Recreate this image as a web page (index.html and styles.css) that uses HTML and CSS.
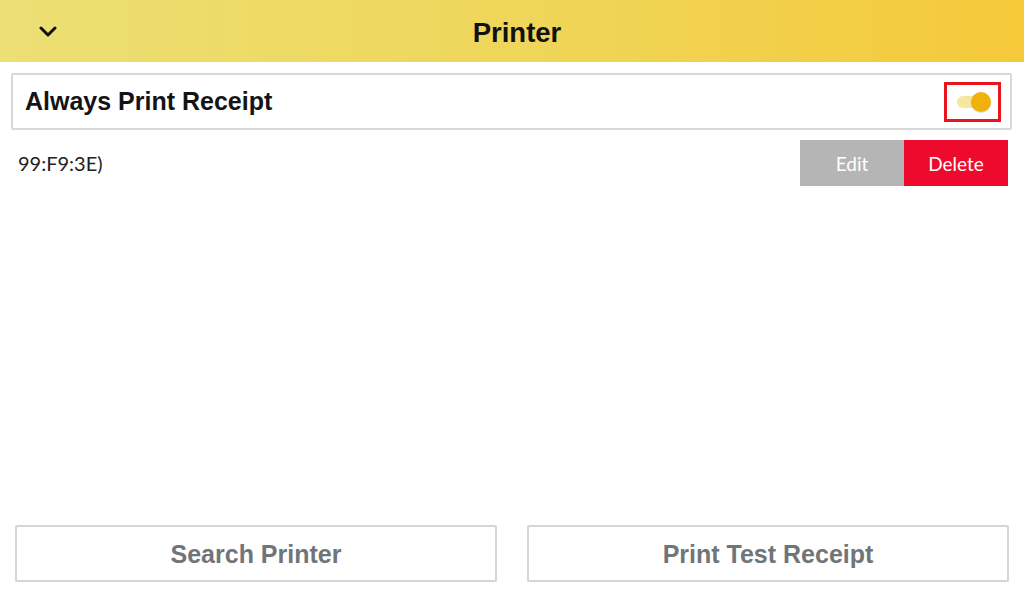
FILE: index.html
```html
<!DOCTYPE html>
<html>
<head>
<meta charset="utf-8">
<link rel="stylesheet" href="styles.css">
</head>
<body>
<div class="app">
  <header class="topbar">
    <span class="back">
      <svg width="18" height="12" viewBox="0 0 18 12"><path d="M2 2 L9 9 L16 2" fill="none" stroke="#111" stroke-width="3" stroke-linecap="round" stroke-linejoin="round"/></svg>
    </span>
    <h1 class="title">Printer</h1>
  </header>
  <main class="content">
    <div class="card">
      <span class="card-label">Always Print Receipt</span>
      <span class="toggle-box">
        <span class="toggle"><span class="track"></span><span class="knob"></span></span>
      </span>
    </div>
    <div class="printer-row">
      <span class="printer-name">99:F9:3E)</span>
      <div class="actions">
        <button class="btn-edit">Edit</button>
        <button class="btn-delete">Delete</button>
      </div>
    </div>
  </main>
  <footer class="bottom">
    <button class="big-btn">Search Printer</button>
    <button class="big-btn">Print Test Receipt</button>
  </footer>
</div>
</body>
</html>
```
FILE: styles.css
```css
* { box-sizing: border-box; }
html, body { margin: 0; padding: 0; }
body {
  width: 1024px;
  height: 598px;
  background: #fff;
  font-family: "Liberation Sans", Arial, sans-serif;
  overflow: hidden;
}
.app {
  display: flex;
  flex-direction: column;
  height: 598px;
}
.topbar {
  height: 62px;
  background: linear-gradient(90deg, #ecdf74 0%, #efd65a 50%, #f5c93a 100%);
  display: flex;
  align-items: center;
  justify-content: center;
  position: relative;
}
.back {
  position: absolute;
  left: 39px;
  top: 26px;
  display: block;
  line-height: 0;
}
.title {
  margin: 0;
  font-size: 27.5px;
  font-weight: bold;
  color: #111;
  padding-left: 10px;
  padding-top: 4px;
}
.content {
  flex: 1;
  padding: 11px 16px 0 11px;
}
.card {
  height: 57px;
  border: 2px solid #d8d8d8;
  border-radius: 2px;
  display: flex;
  align-items: center;
  justify-content: space-between;
  padding: 0 9px 0 12px;
  margin-right: -4px;
}
.card-label {
  font-size: 25px;
  font-weight: bold;
  color: #141414;
}
.toggle-box {
  width: 57px;
  height: 40px;
  border: 3px solid #e8141e;
  display: flex;
  align-items: center;
  justify-content: center;
}
.toggle {
  position: relative;
  width: 32px;
  height: 20px;
  display: block;
}
.track {
  position: absolute;
  left: 0;
  top: 4px;
  width: 28px;
  height: 12px;
  border-radius: 6px;
  background: #f6e6a0;
}
.knob {
  position: absolute;
  right: -2px;
  top: 0;
  width: 20px;
  height: 20px;
  border-radius: 50%;
  background: #f0b10c;
  box-shadow: 0 1px 1px rgba(0,0,0,0.15);
}
.printer-row {
  display: flex;
  align-items: center;
  justify-content: space-between;
  margin-top: 10px;
  padding-left: 7px;
}
.printer-name {
  font-family: Lato, "Liberation Sans", sans-serif;
  font-size: 20px;
  color: #222;
  margin-top: -1px;
}
.actions {
  display: flex;
}
.actions button {
  width: 104px;
  height: 46px;
  border: none;
  font-family: Lato, "Liberation Sans", sans-serif;
  font-size: 19px;
  color: #fff;
  padding: 0;
}
.btn-edit { background: #b5b5b5; color: #f2f2f2; }
.btn-delete { background: #ee0a2c; width: 103px; }
.bottom {
  display: flex;
  gap: 30px;
  padding: 0 15px 16px 15px;
}
.big-btn {
  flex: 1;
  height: 57px;
  background: #fff;
  border: 2px solid #d6d6d6;
  border-radius: 2px;
  font-family: "Liberation Sans", Arial, sans-serif;
  font-size: 25px;
  font-weight: bold;
  color: #707579;
  padding-top: 2px;
}
```
